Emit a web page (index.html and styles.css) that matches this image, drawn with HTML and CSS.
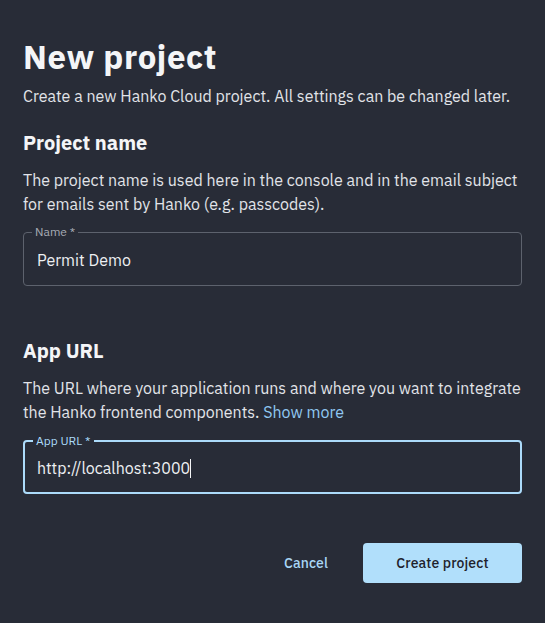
FILE: index.html
```html
<!DOCTYPE html>
<html lang="en">
<head>
<meta charset="utf-8">
<title>New project</title>
<link rel="stylesheet" href="styles.css">
</head>
<body>
<main class="dialog">
  <h1 class="title">New project</h1>
  <p class="subtitle">Create a new Hanko Cloud project. All settings can be changed later.</p>

  <section class="section">
    <h2 class="section-title">Project name</h2>
    <p class="section-text">The project name is used here in the console and in the email subject for emails sent by Hanko (e.g. passcodes).</p>
    <fieldset class="field">
      <legend class="field-label">Name *</legend>
      <div class="field-value">Permit Demo</div>
    </fieldset>
  </section>

  <section class="section section-url">
    <h2 class="section-title">App URL</h2>
    <p class="section-text">The URL where your application runs and where you want to integrate the Hanko frontend components. <a class="link" href="#">Show more</a></p>
    <fieldset class="field field-focused">
      <legend class="field-label">App URL *</legend>
      <div class="field-value">http://localhost:3000<span class="caret"></span></div>
    </fieldset>
  </section>

  <div class="actions">
    <button class="btn btn-text" type="button">Cancel</button>
    <button class="btn btn-primary" type="button">Create project</button>
  </div>
</main>
</body>
</html>
```

FILE: styles.css
```css
html, body {
  margin: 0;
  padding: 0;
}

body {
  background: #282c37;
  color: #eef0f3;
  font-family: "IBM Plex Sans", Roboto, "Liberation Sans", sans-serif;
  width: 545px;
  height: 623px;
}

.dialog {
  padding: 37px 23px 40px;
  display: flex;
  flex-direction: column;
}

.title {
  margin: 0;
  font-size: 33px;
  line-height: 40px;
  font-weight: 700;
  letter-spacing: 0.6px;
  color: #f4f5f7;
}

.subtitle {
  margin: 7px 0 0;
  font-size: 16px;
  line-height: 24px;
  color: #e2e4e9;
}

.section {
  margin-top: 21px;
}

.section-url {
  margin-top: 51px;
}

.section-title {
  margin: 0;
  font-size: 20px;
  line-height: 28px;
  font-weight: 700;
  color: #f4f5f7;
}

.section-text {
  margin: 11px 0 0;
  font-size: 16px;
  line-height: 24px;
  color: #e2e4e9;
}

.link {
  color: #90c8f2;
  text-decoration: none;
}

.field {
  margin: 8px 0 0;
  padding: 8px 13px 13px;
  border: 1px solid #5d626d;
  border-radius: 4px;
  min-width: 0;
}

.field-label {
  margin-left: -5px;
  padding: 0 3px;
  font-size: 12px;
  line-height: 16px;
  color: #a9adb6;
}

.field-value {
  font-size: 16px;
  line-height: 24px;
  color: #eef0f3;
}

.field-focused {
  border: 2px solid #acdbfa;
  padding: 7px 12px 12px;
  margin-top: 9px;
}

.field-focused .field-label {
  color: #acdbfa;
  margin-left: -4px;
}

.caret {
  display: inline-block;
  width: 1px;
  height: 19px;
  background: #f4f5f7;
  vertical-align: -4px;
}

.actions {
  margin-top: 49px;
  display: flex;
  justify-content: flex-end;
  align-items: center;
  gap: 19px;
}

.btn {
  font-family: inherit;
  font-size: 14px;
  font-weight: 500;
  letter-spacing: 0.1px;
  height: 40px;
  border: none;
  border-radius: 4px;
  cursor: pointer;
}

.btn-text {
  background: transparent;
  color: #a9d6f5;
  padding: 0 16px;
}

.btn-primary {
  background: #b1dffb;
  color: #1e222b;
  width: 159px;
  padding: 0;
}
```
